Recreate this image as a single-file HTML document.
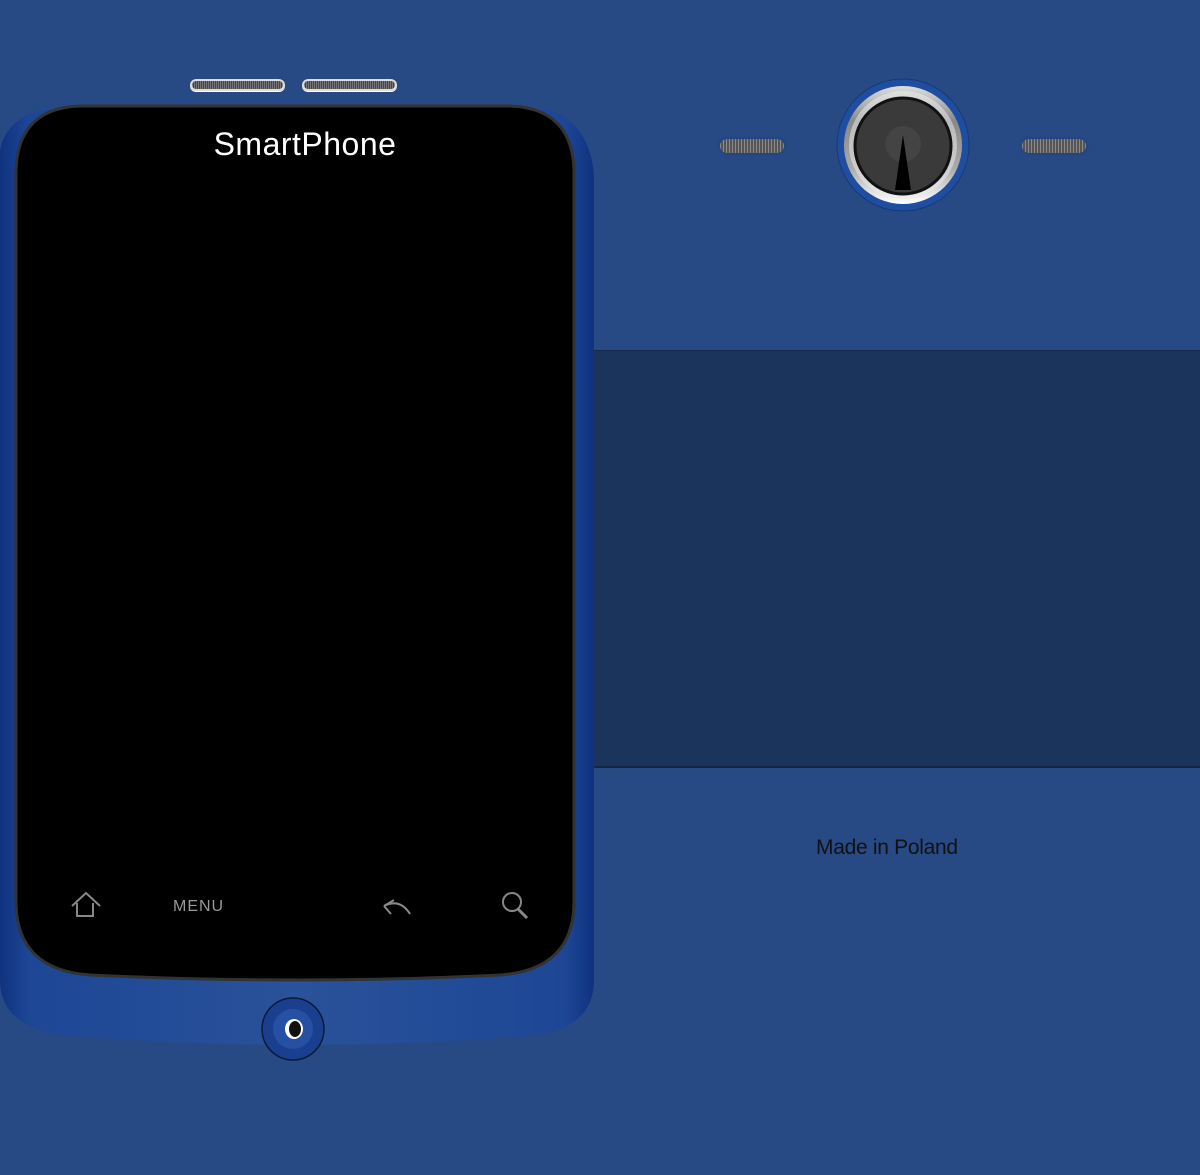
<!DOCTYPE html>
<html><head><meta charset="utf-8"><style>
html,body{margin:0;padding:0}
body{width:1200px;height:1175px;background:#274a85;position:relative;overflow:hidden;font-family:"Liberation Sans",sans-serif}
.abs{position:absolute}
.panel{left:593px;top:350px;width:607px;height:415px;background:#1b345c;border-top:1px solid #14284a;border-bottom:2px solid #132645}
.grill{height:12px;border-radius:6px;background:repeating-linear-gradient(90deg,#777 0 1px,#444 1px 2px),#555;box-shadow:0 0 0 2px #ddd inset,0 1px 0 #fff}
.grill2{height:14px;border-radius:7px;background:repeating-linear-gradient(90deg,#8a8a8a 0 1px,#555 1px 3px);box-shadow:0 0 3px #1a3a7a}
</style></head><body>
<div class="abs panel"></div>

<svg class="abs" style="left:0;top:0" width="600" height="1100">
<defs>
<linearGradient id="bg" x1="0" x2="1"><stop offset="0" stop-color="#0f327f"/><stop offset="0.05" stop-color="#1d4795"/><stop offset="0.5" stop-color="#2a529a"/><stop offset="0.95" stop-color="#1d4795"/><stop offset="1" stop-color="#0f327f"/></linearGradient>
</defs>
<path d="M0,150 Q6,120 40,110 L550,110 Q590,125 594,175 L594,980 Q594,1025 540,1035 Q300,1055 60,1035 Q0,1025 0,980 Z" fill="url(#bg)"/>
<path d="M16,170 Q18,108 80,106 L510,106 Q572,108 574,170 L574,905 Q572,970 500,975 Q300,985 90,975 Q18,970 16,905 Z" fill="#000" stroke="#333" stroke-width="3"/>
<ellipse cx="293" cy="1029" rx="31" ry="31" fill="#1a3f8f" stroke="#0a1a3a" stroke-width="1.5"/>
<ellipse cx="293" cy="1029" rx="20" ry="20" fill="#2d5cb0" opacity="0.6"/>
<ellipse cx="294" cy="1029" rx="9" ry="10" fill="#fff"/>
<ellipse cx="295" cy="1029" rx="6" ry="8" fill="#111"/>
<g fill="none" stroke="#888" stroke-width="2">
<path d="M72,906 L86,893 L100,906 M77,903 L77,916 L93,916 L93,903"/>
<path d="M384,906 Q400,898 410,914 M384,906 L394,900 M384,906 L391,914"/>
<circle cx="512" cy="902" r="9"/><path d="M518,909 L527,918" stroke-width="3"/>
</g>
<text x="173" y="911" fill="#999" font-size="16" letter-spacing="1">MENU</text>
<text x="305" y="155" fill="#fff" font-size="32" text-anchor="middle" letter-spacing="0.5">SmartPhone</text>
</svg>

<div class="abs grill" style="left:190px;top:79px;width:95px"></div>
<div class="abs grill" style="left:302px;top:79px;width:95px"></div>

<div class="abs grill2" style="left:720px;top:139px;width:64px"></div>
<div class="abs grill2" style="left:1022px;top:139px;width:64px"></div>

<svg class="abs" style="left:836px;top:78px" width="134" height="134">
<defs><linearGradient id="ring" x1="0" y1="0" x2="0" y2="1"><stop offset="0" stop-color="#ddd"/><stop offset="0.3" stop-color="#888"/><stop offset="0.7" stop-color="#aaa"/><stop offset="1" stop-color="#fff"/></linearGradient></defs>
<circle cx="67" cy="67" r="66" fill="#1f4ea0" stroke="#163a78" stroke-width="1"/>
<circle cx="67" cy="67" r="59" fill="url(#ring)"/>
<circle cx="67" cy="67" r="54" fill="#eee" opacity="0.5"/>
<circle cx="67" cy="68" r="48" fill="#3a3a3a" stroke="#111" stroke-width="3"/>
<circle cx="67" cy="66" r="18" fill="#444"/>
<path d="M67,57 L59,112 L75,112 Z" fill="#000"/>
</svg>

<div class="abs" style="left:816px;top:836px;font-size:21px;color:#111;letter-spacing:-0.3px">Made in Poland</div>
</body></html>
